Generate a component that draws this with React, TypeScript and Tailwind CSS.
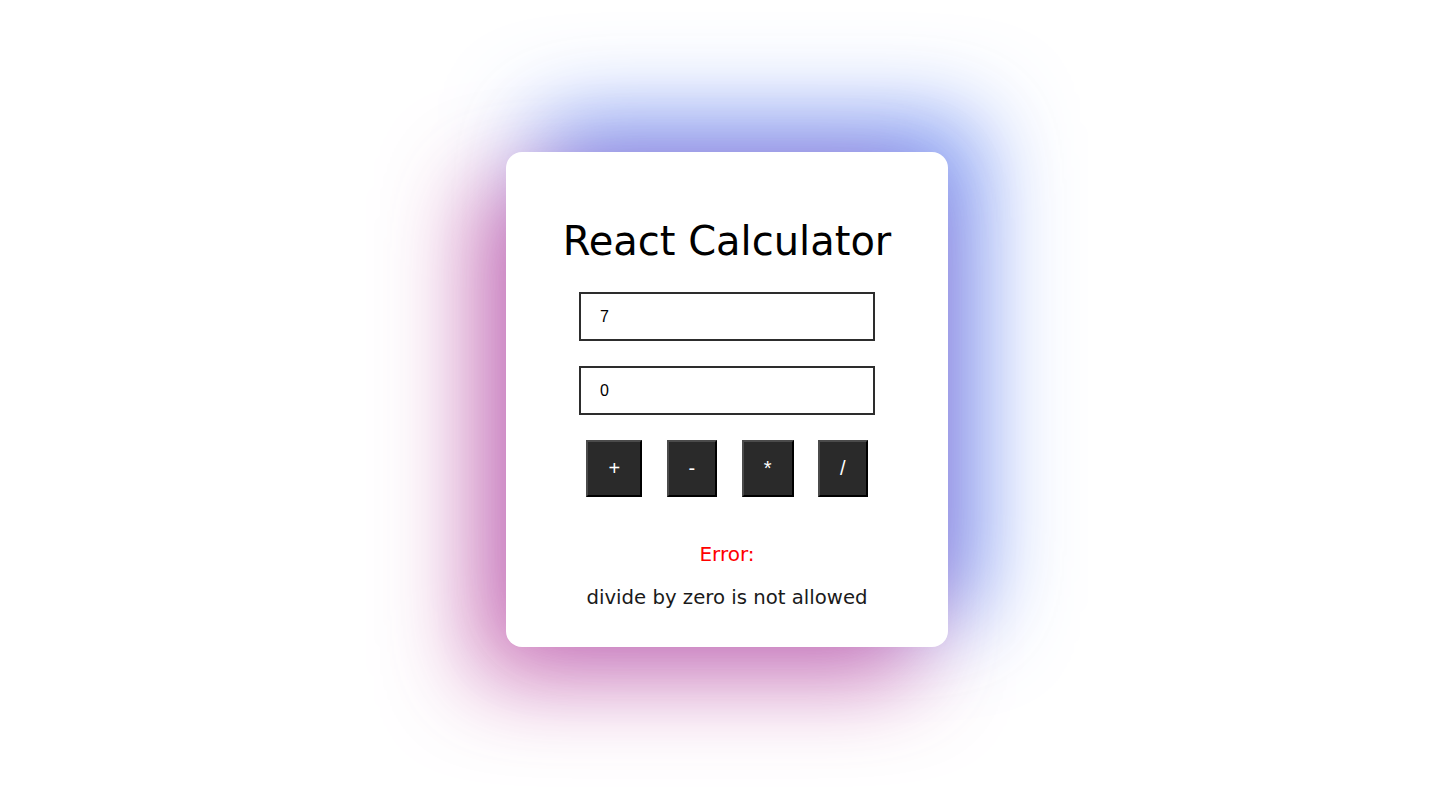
import { useState } from "react";

const ops = ["+", "-", "*", "/"];

export default function App() {
  const [a, setA] = useState("7");
  const [b, setB] = useState("0");
  const [error, setError] = useState("divide by zero is not allowed");
  const [result, setResult] = useState<number | null>(null);

  const calc = (op: string) => {
    const x = parseFloat(a);
    const y = parseFloat(b);
    if (op === "/" && y === 0) {
      setError("divide by zero is not allowed");
      setResult(null);
      return;
    }
    setError("");
    if (op === "+") setResult(x + y);
    if (op === "-") setResult(x - y);
    if (op === "*") setResult(x * y);
    if (op === "/") setResult(x / y);
  };

  return (
    <div className="flex min-h-screen items-center justify-center overflow-hidden bg-white">
      <div className="mt-[2px] mr-[1px] flex w-[442px] flex-col items-center rounded-[16px] bg-white pt-[65px] pb-[37px] font-['DejaVu_Sans',sans-serif] shadow-[-32px_32px_90px_rgba(200,95,170,0.85),32px_-32px_90px_rgba(95,135,245,0.85)]">
        <h1 className="text-[40px] leading-[48px] text-black">React Calculator</h1>

        <input
          value={a}
          onChange={(e) => setA(e.target.value)}
          className="mt-[27px] h-[49px] w-[296px] border-2 border-[#2d2d2d] px-[19px] font-['Liberation_Sans',Arial,sans-serif] text-[16px] text-black outline-none"
        />
        <input
          value={b}
          onChange={(e) => setB(e.target.value)}
          className="mt-[25px] h-[49px] w-[296px] border-2 border-[#2d2d2d] px-[19px] font-['Liberation_Sans',Arial,sans-serif] text-[16px] text-black outline-none"
        />

        <div className="mt-[25px] flex gap-[24.5px]">
          {ops.map((op) => (
            <button
              key={op}
              onClick={() => calc(op)}
              className="border-2 border-t-[#4b4b4b] border-l-[#4b4b4b] border-r-black border-b-black bg-[#2a2a2a] px-[20px] py-[15px] font-['Liberation_Sans',Arial,sans-serif] text-[20px] leading-[23px] text-white"
            >
              {op}
            </button>
          ))}
        </div>

        {error ? (
          <>
            <p className="mt-[45px] text-[20px] leading-[24px] text-[#ff0000]">Error:</p>
            <p className="mt-[20px] text-[19.7px] leading-[24px] text-[#1a1a1a]">{error}</p>
          </>
        ) : (
          <>
            <p className="mt-[45px] text-[20px] leading-[24px] text-black">Result:</p>
            <p className="mt-[20px] text-[19.7px] leading-[24px] text-[#1a1a1a]">{result}</p>
          </>
        )}
      </div>
    </div>
  );
}
